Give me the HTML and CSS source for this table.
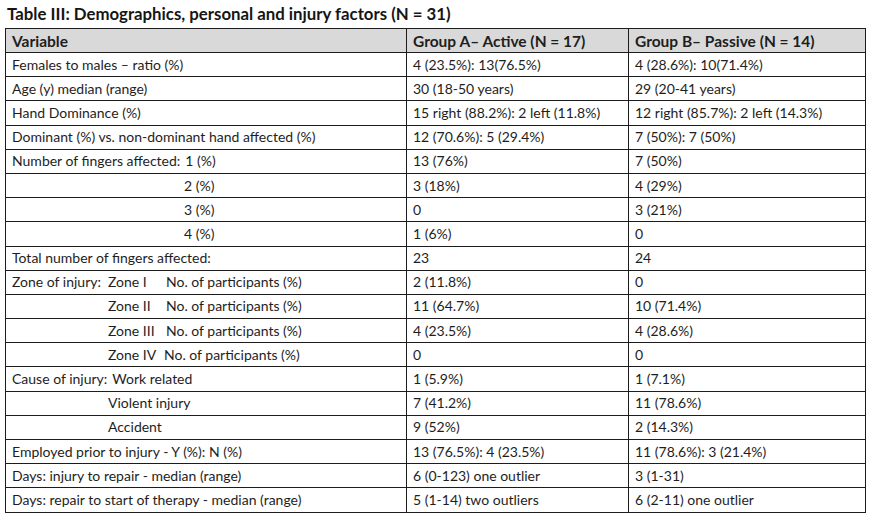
FILE: index.html
```html
<!DOCTYPE html>
<html lang="en">
<head>
<meta charset="utf-8">
<title>Table III</title>
<link rel="stylesheet" href="styles.css">
</head>
<body>
<div class="page">
  <h1 class="title">Table III: Demographics, personal and injury factors (N = 31)</h1>
  <table class="data">
    <colgroup>
      <col class="c1"><col class="c2"><col class="c3">
    </colgroup>
    <thead>
      <tr><th>Variable</th><th>Group A– Active (N = 17)</th><th>Group B– Passive (N = 14)</th></tr>
    </thead>
    <tbody>
      <tr><td>Females to males – ratio (%)</td><td>4 (23.5%): 13(76.5%)</td><td>4 (28.6%): 10(71.4%)</td></tr>
      <tr><td>Age (y) median (range)</td><td>30 (18-50 years)</td><td>29 (20-41 years)</td></tr>
      <tr><td>Hand Dominance (%)</td><td>15 right (88.2%): 2 left (11.8%)</td><td>12 right (85.7%): 2 left (14.3%)</td></tr>
      <tr><td>Dominant (%) vs. non-dominant hand affected (%)</td><td>12 (70.6%): 5 (29.4%)</td><td>7 (50%): 7 (50%)</td></tr>
      <tr><td><span class="lab-fing">Number of fingers affected:</span>1 (%)</td><td>13 (76%)</td><td>7 (50%)</td></tr>
      <tr><td><span class="lab-fing"></span>2 (%)</td><td>3 (18%)</td><td>4 (29%)</td></tr>
      <tr><td><span class="lab-fing"></span>3 (%)</td><td>0</td><td>3 (21%)</td></tr>
      <tr><td><span class="lab-fing"></span>4 (%)</td><td>1 (6%)</td><td>0</td></tr>
      <tr><td>Total number of fingers affected:</td><td>23</td><td>24</td></tr>
      <tr><td><span class="lab-zone">Zone of injury:</span><span class="zone">Zone I</span>No. of participants (%)</td><td>2 (11.8%)</td><td>0</td></tr>
      <tr><td><span class="lab-zone"></span><span class="zone">Zone II</span>No. of participants (%)</td><td>11 (64.7%)</td><td>10 (71.4%)</td></tr>
      <tr><td><span class="lab-zone"></span><span class="zone">Zone III</span>No. of participants (%)</td><td>4 (23.5%)</td><td>4 (28.6%)</td></tr>
      <tr><td><span class="lab-zone"></span><span class="zone zone-iv">Zone IV</span>No. of participants (%)</td><td>0</td><td>0</td></tr>
      <tr><td><span class="lab-zone">Cause of injury:</span>Work related</td><td>1 (5.9%)</td><td>1 (7.1%)</td></tr>
      <tr><td><span class="lab-zone"></span>Violent injury</td><td>7 (41.2%)</td><td>11 (78.6%)</td></tr>
      <tr><td><span class="lab-zone"></span>Accident</td><td>9 (52%)</td><td>2 (14.3%)</td></tr>
      <tr><td>Employed prior to injury - Y (%): N (%)</td><td>13 (76.5%): 4 (23.5%)</td><td>11 (78.6%): 3 (21.4%)</td></tr>
      <tr><td>Days: injury to repair - median (range)</td><td>6 (0-123) one outlier</td><td>3 (1-31)</td></tr>
      <tr><td>Days: repair to start of therapy - median (range)</td><td>5 (1-14) two outliers</td><td>6 (2-11) one outlier</td></tr>
    </tbody>
  </table>
</div>
</body>
</html>
```

FILE: styles.css
```css
html, body {
  margin: 0;
  padding: 0;
  background: #ffffff;
}

body {
  font-family: Lato, "Open Sans", "Liberation Sans", sans-serif;
  color: #1e1e1e;
}

.page {
  padding: 5px 0 0 5px;
}

.title {
  margin: 0 0 0 2px;
  font-size: 16.8px;
  font-weight: 700;
  line-height: 18px;
  height: 23px;
  color: #151515;
}

.data {
  border-collapse: collapse;
  table-layout: fixed;
  width: 860px;
  font-size: 14px;
}

.c1 { width: 401px; }
.c2 { width: 222px; }
.c3 { width: 237px; }

.data th,
.data td {
  border: 1px solid #1c1c1c;
  padding: 0 6px;
  text-align: left;
  vertical-align: middle;
  white-space: nowrap;
  line-height: 16px;
}

.data thead tr { height: 24px; }
.data tbody tr { height: 24.2px; }

.data th {
  background: #d9d9d9;
  font-weight: 700;
  font-size: 15.5px;
}

.lab-fing,
.lab-zone,
.zone {
  display: inline-block;
  box-sizing: border-box;
  padding-right: 5px;
}

.lab-fing { min-width: 172px; }
.lab-zone { min-width: 96px; }
.zone { min-width: 58px; }
.zone-iv { min-width: 56px; }
```
